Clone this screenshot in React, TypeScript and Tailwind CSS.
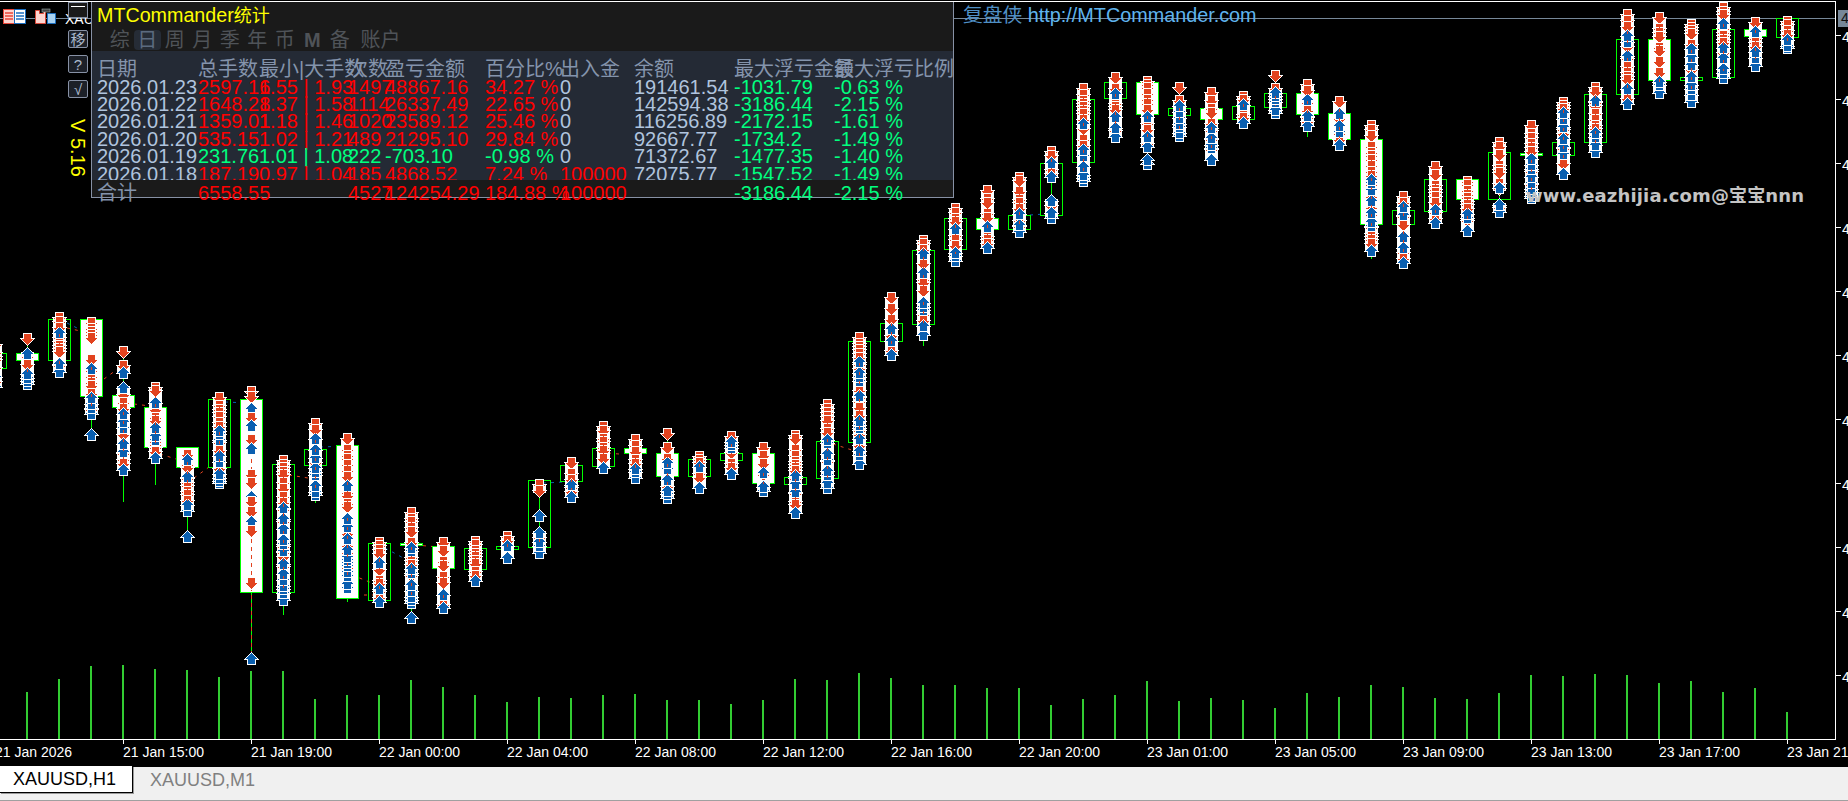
import React from "react";

const sans = "font-['Liberation_Sans','Noto_Sans_CJK_SC',sans-serif]";

type Seg = [number, number];
type Bar = {
  i: number;
  top: number;
  bot: number;
  fill?: boolean;
  segs: Seg[];
  wick?: number;
  arrows?: [number, "u" | "d"][];
};

// candles read off the chart, in page pixels
const bars: Bar[] = [
  { i: -1, top: 353, bot: 368, segs: [[340, 392]] },
  { i: 0, top: 353, bot: 360, fill: true, segs: [[334, 345], [348, 389]] },
  { i: 1, top: 319, bot: 360, segs: [[313, 377]] },
  { i: 2, top: 319, bot: 396, fill: true, segs: [[318, 344], [355, 419], [430, 440]], wick: 430 },
  { i: 3, top: 395, bot: 407, fill: true, segs: [[347, 358], [361, 378], [382, 475]], wick: 502 },
  { i: 4, top: 407, bot: 447, fill: true, segs: [[383, 463]], wick: 485 },
  { i: 5, top: 447, bot: 467, fill: true, segs: [[450, 516], [532, 542]], wick: 532 },
  { i: 6, top: 399, bot: 467, segs: [[393, 488]] },
  {
    i: 7, top: 399, bot: 592, fill: true, segs: [], wick: 653,
    arrows: [[387, "d"], [392, "d"], [403, "u"], [413, "d"], [420, "u"], [435, "d"], [443, "u"], [470, "d"], [478, "d"], [491, "u"], [497, "d"], [507, "d"], [516, "u"], [526, "d"], [578, "d"], [653, "u"]],
  },
  { i: 8, top: 464, bot: 592, segs: [[456, 605]], wick: 615 },
  { i: 9, top: 449, bot: 465, segs: [[419, 500]], wick: 503 },
  { i: 10, top: 445, bot: 598, fill: true, segs: [[434, 593]], wick: 602 },
  { i: 11, top: 543, bot: 600, segs: [[538, 607]] },
  { i: 12, top: 543, bot: 545, fill: true, segs: [[508, 608], [613, 623]] },
  { i: 13, top: 546, bot: 568, fill: true, segs: [[538, 613]] },
  { i: 14, top: 548, bot: 569, segs: [[537, 586]] },
  { i: 15, top: 546, bot: 549, segs: [[532, 563]] },
  { i: 16, top: 480, bot: 547, segs: [[480, 497], [510, 521], [527, 558]] },
  { i: 17, top: 465, bot: 481, segs: [[458, 502]] },
  { i: 18, top: 448, bot: 466, segs: [[422, 473]] },
  { i: 19, top: 448, bot: 453, fill: true, segs: [[435, 483]] },
  { i: 20, top: 453, bot: 476, fill: true, segs: [[429, 440], [443, 503]] },
  { i: 21, top: 459, bot: 476, segs: [[452, 493]] },
  { i: 22, top: 453, bot: 460, segs: [[432, 479]] },
  { i: 23, top: 453, bot: 483, fill: true, segs: [[443, 496]] },
  { i: 24, top: 477, bot: 484, segs: [[431, 518]] },
  { i: 25, top: 441, bot: 478, segs: [[400, 493]] },
  { i: 26, top: 341, bot: 442, segs: [[333, 469]] },
  { i: 27, top: 323, bot: 341, segs: [[293, 360]] },
  { i: 28, top: 250, bot: 324, segs: [[236, 340]], wick: 346 },
  { i: 29, top: 218, bot: 249, segs: [[204, 266]] },
  { i: 30, top: 218, bot: 229, fill: true, segs: [[186, 253]] },
  { i: 31, top: 215, bot: 229, segs: [[173, 237]] },
  { i: 32, top: 163, bot: 215, segs: [[147, 182], [195, 223]] },
  { i: 33, top: 99, bot: 162, segs: [[84, 186]] },
  { i: 34, top: 82, bot: 98, segs: [[73, 142]] },
  { i: 35, top: 82, bot: 114, fill: true, segs: [[77, 152], [154, 169]] },
  { i: 36, top: 108, bot: 115, segs: [[83, 94], [96, 141]] },
  { i: 37, top: 108, bot: 119, fill: true, segs: [[88, 165]] },
  { i: 38, top: 106, bot: 119, segs: [[92, 128]] },
  { i: 39, top: 93, bot: 107, segs: [[70, 82], [84, 118]] },
  { i: 40, top: 93, bot: 114, fill: true, segs: [[80, 131]], wick: 137 },
  { i: 41, top: 113, bot: 139, fill: true, segs: [[97, 150]] },
  { i: 42, top: 139, bot: 224, fill: true, segs: [[121, 256]], wick: 259 },
  { i: 43, top: 210, bot: 224, segs: [[192, 268]] },
  { i: 44, top: 179, bot: 211, segs: [[162, 228]] },
  { i: 45, top: 179, bot: 199, fill: true, segs: [[177, 236]] },
  { i: 46, top: 152, bot: 199, segs: [[138, 195], [199, 217]] },
  { i: 47, top: 153, bot: 155, fill: true, segs: [[121, 203]] },
  { i: 48, top: 142, bot: 155, segs: [[98, 179]] },
  { i: 49, top: 94, bot: 142, segs: [[83, 157]] },
  { i: 50, top: 39, bot: 94, segs: [[10, 109]] },
  { i: 51, top: 39, bot: 80, fill: true, segs: [[13, 98]] },
  { i: 52, top: 77, bot: 80, segs: [[20, 107]] },
  { i: 53, top: 29, bot: 77, segs: [[3, 83]] },
  { i: 54, top: 29, bot: 36, fill: true, segs: [[18, 71]] },
  { i: 55, top: 18, bot: 37, segs: [[17, 53]] },
];

const volumeTops = [
  692, 679, 666, 665, 669, 670, 677, 671, 671, 699, 695, 695, 680, 687, 695, 702, 697, 698, 695, 694, 700, 700, 704, 700, 679, 680, 673, 678, 685, 685, 688, 688, 705, 699, 695, 681, 701, 698, 700, 708, 693, 697, 685, 687, 698, 699, 693, 675, 676, 674, 675, 683, 681, 692, 688, 712,
];

const orderLines: [number, number, number, number, string][] = [
  [67, 323, 85, 332, "#0a5fb0"],
  [67, 328, 85, 332, "#e2431f"],
  [104, 379, 119, 368, "#e2431f"],
  [134, 404, 150, 406, "#e2431f"],
  [160, 454, 176, 459, "#e2431f"],
  [194, 478, 209, 467, "#e2431f"],
  [225, 402, 249, 403, "#0a5fb0"],
  [289, 475, 308, 478, "#e2431f"],
  [320, 447, 348, 446, "#0a5fb0"],
  [352, 575, 372, 583, "#e2431f"],
  [348, 595, 374, 595, "#e2431f"],
  [385, 548, 407, 560, "#0a5fb0"],
  [415, 545, 439, 547, "#e2431f"],
  [543, 483, 565, 482, "#0a5fb0"],
  [608, 453, 619, 454, "#e2431f"],
  [833, 444, 855, 451, "#e2431f"],
  [1030, 215, 1045, 214, "#0a5fb0"],
];

const cx = (i: number) => 27 + 32 * i;

const Arrow = ({ x, y, dir }: { x: number; y: number; dir: "u" | "d" }) => {
  const pts =
    dir === "d"
      ? `${x - 3},${y} ${x + 4},${y} ${x + 4},${y + 5} ${x + 6},${y + 5} ${x + 0.5},${y + 11} ${x - 5},${y + 5} ${x - 3},${y + 5}`
      : `${x - 3},${y + 11} ${x + 4},${y + 11} ${x + 4},${y + 6} ${x + 6},${y + 6} ${x + 0.5},${y} ${x - 5},${y + 6} ${x - 3},${y + 6}`;
  return (
    <polygon
      points={pts}
      fill={dir === "d" ? "#e2431f" : "#0a5fb0"}
      stroke="#fff"
      strokeWidth={1.6}
      paintOrder="stroke"
      shapeRendering="crispEdges"
    />
  );
};

const Candle = ({ bar }: { bar: Bar }) => {
  const x = cx(bar.i);
  let seed = (bar.i + 7) * 7919;
  const rand = () => {
    seed = (seed * 1103515245 + 12345) % 2147483648;
    return seed / 2147483648;
  };
  const first = bar.segs.length ? bar.segs[0][0] : bar.top - 12;
  const last = bar.segs.length ? bar.segs[bar.segs.length - 1][1] : bar.bot;
  const wickBot = bar.wick ?? last;
  const list: [number, "u" | "d"][] = [];
  bar.segs.forEach(([t, b], s) => {
    let y = t;
    let n = 0;
    while (y + 12 < b) {
      const frac = (y - first) / (last - first);
      list.push([y, n === 0 && s === 0 ? "d" : rand() * 1.15 > frac ? "d" : "u"]);
      const r = rand();
      y += r < 0.25 ? 3 : r < 0.5 ? 4 : r < 0.72 ? 6 : r < 0.88 ? 8 : 11;
      n++;
    }
    const end: "u" | "d" =
      s === bar.segs.length - 1 ? "u" : n === 0 && s === 0 ? "d" : rand() > (b - first) / (last - first) ? "d" : "u";
    list.push([b - 11, end]);
  });
  // orange ones top-down and blue ones bottom-up, so the stems show as stripes
  const downs = list.filter((a) => a[1] === "d");
  const ups = list.filter((a) => a[1] === "u").reverse();
  return (
    <g>
      <line x1={x + 0.5} x2={x + 0.5} y1={first} y2={wickBot} stroke="#00ff00" shapeRendering="crispEdges" />
      <rect
        x={x - 10.5}
        y={bar.top + 0.5}
        width={22}
        height={bar.bot - bar.top}
        fill={bar.fill ? "#fff" : "none"}
        stroke="#00ff00"
        strokeWidth={1.5}
        shapeRendering="crispEdges"
      />
      {bar.segs.map(([t, b]) =>
        b - t > 16 ? <rect key={t} x={x - 6} y={t + 4} width={13} height={b - t - 8} fill="#fff" shapeRendering="crispEdges" /> : null,
      )}
      {bar.arrows ? (
        <line x1={x + 0.5} x2={x + 0.5} y1={first} y2={wickBot} stroke="#e2431f" strokeDasharray="4 4" shapeRendering="crispEdges" />
      ) : null}
      {downs.map(([y], k) => (
        <Arrow key={`d${k}`} x={x} y={y} dir="d" />
      ))}
      {ups.map(([y], k) => (
        <Arrow key={`u${k}`} x={x} y={y} dir="u" />
      ))}
      {bar.arrows?.map(([y, d], k) => (
        <Arrow key={`a${k}`} x={x} y={y} dir={d} />
      ))}
      {bar.segs.map(([t, b]) =>
        b - t > 30 ? (
          <line key={t} x1={x + 0.5} x2={x + 0.5} y1={t + 12} y2={b - 12} stroke="#e2431f" strokeDasharray="3 6" shapeRendering="crispEdges" />
        ) : null,
      )}
    </g>
  );
};

type Row = { date: string; vals: string[]; up: boolean; cash?: boolean };

const rows: Row[] = [
  { date: "2026.01.23", vals: ["2597.16", "1.55 | 1.93", "1497", "48867.16", "34.27 %"], up: true },
  { date: "2026.01.22", vals: ["1648.28", "1.37 | 1.58", "1114", "26337.49", "22.65 %"], up: true },
  { date: "2026.01.21", vals: ["1359.01", "1.18 | 1.46", "1020", "23589.12", "25.46 %"], up: true },
  { date: "2026.01.20", vals: ["535.15", "1.02 | 1.21", "489", "21295.10", "29.84 %"], up: true },
  { date: "2026.01.19", vals: ["231.76", "1.01 | 1.08", "222", "-703.10", "-0.98 %"], up: false },
  { date: "2026.01.18", vals: ["187.19", "0.97 | 1.04", "185", "4868.52", "7.24 %"], up: true, cash: true },
];
const tail = [
  ["191461.54", "-1031.79", "-0.63 %"],
  ["142594.38", "-3186.44", "-2.15 %"],
  ["116256.89", "-2172.15", "-1.61 %"],
  ["92667.77", "-1734.2", "-1.49 %"],
  ["71372.67", "-1477.35", "-1.40 %"],
  ["72075.77", "-1547.52", "-1.49 %"],
];

const cols = "grid grid-cols-[101px_61px_89px_37px_100px_75px_74px_100px_100px_119px] whitespace-nowrap";
const headers = ["日期", "总手数", "最小|大手数", "次数", "盈亏金额", "百分比%", "出入金", "余额", "最大浮亏金额", "最大浮亏比例"];
const tabs = ["综", "日", "周", "月", "季", "年", "币", "M", "备"];
const times = ["21 Jan 2026", "21 Jan 15:00", "21 Jan 19:00", "22 Jan 00:00", "22 Jan 04:00", "22 Jan 08:00", "22 Jan 12:00", "22 Jan 16:00", "22 Jan 20:00", "23 Jan 01:00", "23 Jan 05:00", "23 Jan 09:00", "23 Jan 13:00", "23 Jan 17:00", "23 Jan 21:00"];

const StatsPanel = () => (
  <div className={`absolute left-[91px] top-[2px] w-[863px] border-x border-b border-[#8791a5] bg-[#1a1a1a] text-[20px] ${sans}`}>
    <div className="h-[49px]">
      <div className="pl-[5px] leading-[26px] text-[19.7px] text-[#ffff00]">
        MTCommander<span className="text-[18px]">统计</span>
      </div>
      <div className="flex pl-[14px] text-[#4f5358] leading-[22px] mt-[1px]">
        {tabs.map((t) => (
          <div key={t} className={`w-[27.5px] h-[20px] flex items-center justify-center rounded-sm ${t === "日" ? "bg-[#262c36] text-[#5c6b80]" : ""} ${t === "M" ? "font-bold" : ""}`}>
            {t}
          </div>
        ))}
        <div className="ml-[7px] h-[20px] flex items-center">账户</div>
      </div>
    </div>
    <div className="h-[129px] overflow-hidden bg-[#242a35] pl-[5px]">
      <div className={`${cols} pt-[9px] h-[27.6px] leading-[18px] text-[#8494ac]`}>
        {headers.map((h) => (
          <div key={h}>{h}</div>
        ))}
      </div>
      {rows.map((r, n) => {
        const c = r.up ? "text-[#ff0000]" : "text-[#00ff7f]";
        return (
          <div key={r.date} className={`${cols} leading-[17.4px] h-[17.4px]`}>
            <div className="text-[#b0c4de]">{r.date}</div>
            {r.vals.map((v) => (
              <div key={v} className={c}>{v}</div>
            ))}
            <div className={r.cash ? "text-[#ff0000]" : "text-[#b0c4de]"}>{r.cash ? "100000" : "0"}</div>
            <div className="text-[#b0c4de]">{tail[n][0]}</div>
            <div className="text-[#00ff7f]">{tail[n][1]}</div>
            <div className="text-[#00ff7f]">{tail[n][2]}</div>
          </div>
        );
      })}
    </div>
    <div className={`${cols} pl-[5px] h-[17px] leading-[26px] text-[#ff0000]`}>
      <div className="text-[#8494ac]">合计</div>
      <div>6558.55</div>
      <div />
      <div>4527</div>
      <div>124254.29</div>
      <div>184.88 %</div>
      <div>100000</div>
      <div />
      <div className="text-[#00ff7f]">-3186.44</div>
      <div className="text-[#00ff7f]">-2.15 %</div>
    </div>
  </div>
);

const SideButtons = () => (
  <div className={`absolute left-[68px] top-[2px] w-[20px] flex flex-col items-center text-[#aab8cc] ${sans}`}>
    <div className="w-[20px] h-[16px] border border-[#8791a5] bg-[#1a1a1a] flex justify-center">
      <div className="w-[14px] h-px bg-white mt-[3px]" />
    </div>
    <div className="w-[20px] h-[18px] mt-[12px] border border-[#8791a5] bg-[#1c2028] rounded-[2px] flex items-center justify-center text-[15px] leading-none">移</div>
    <div className="w-[20px] h-[18px] mt-[7px] border border-[#8791a5] bg-[#1c2028] rounded-[2px] flex items-center justify-center text-[15px] leading-none">?</div>
    <div className="w-[20px] h-[18px] mt-[7px] border border-[#8791a5] bg-[#1c2028] rounded-[2px] flex items-center justify-center text-[15px] leading-none">√</div>
    <div className="mt-[21px] text-[#ffff00] text-[20px] leading-[20px] [writing-mode:vertical-rl] whitespace-nowrap">V 5.16</div>
  </div>
);

const ToolIcons = () => (
  <div className="absolute left-[3px] top-[8px] flex gap-[9px]">
    <svg width="23" height="17" viewBox="0 0 23 17">
      <rect x="0.5" y="1.5" width="11" height="14" fill="#fdd5d0" stroke="#e8473a" />
      <rect x="11.5" y="1.5" width="11" height="14" fill="#fff" stroke="#1c6fc0" />
      <path d="M2 5h8M2 8h8M2 11h8" stroke="#e8473a" strokeWidth="1.6" />
      <path d="M13 5h8M13 8h8M13 11h8" stroke="#1c6fc0" strokeWidth="1.6" />
    </svg>
    <svg width="22" height="17" viewBox="0 0 22 17">
      <path d="M0.5 15.5V2.5h4v3h4v-3h2v13z" fill="#fdd5d0" stroke="#d9483a" />
      <path d="M12.5 15.5V5.5h8v10z" fill="#a9d3f2" stroke="#1c6fc0" />
      <rect x="7" y="1" width="8" height="3" fill="#444" stroke="#9aa" strokeWidth="0.6" />
    </svg>
    <div className={`w-[27px] h-[17px] mt-[3px] overflow-hidden text-white text-[14px] leading-[17px] ${sans} -ml-[1px]`}>XAUUSD</div>
  </div>
);

const Chart = () => (
  <div className="relative w-[1836px] h-[739px] border-t border-r border-b border-white mt-px overflow-hidden">
    <svg className="block" width="1835" height="737" viewBox="0 2 1835 737">
      <line x1="0" x2="1835" y1="18.5" y2="18.5" stroke="#778899" />
      {volumeTops.map((t, i) => (
        <rect key={i} x={cx(i) - 1} y={t} width={2} height={739 - t} fill="#32cd32" />
      ))}
      {orderLines.map(([a, b, c, d, col], k) => (
        <line key={k} x1={a} y1={b} x2={c} y2={d} stroke={col} strokeDasharray="3 5" />
      ))}
      {bars.map((b) => (
        <Candle key={b.i} bar={b} />
      ))}
    </svg>
  </div>
);

const PriceAxis = () => (
  <div className={`relative flex-1 overflow-hidden pt-[35px] text-white text-[14px] ${sans}`}>
    <div className="absolute left-[2px] top-[10px] w-[12px] h-[17px] bg-[#778899] text-[#111] leading-[17px] pl-[3px]">4</div>
    {Array.from({ length: 11 }).map((_, i) => (
      <div key={i} className="h-[64px] flex items-start">
        <div className="w-[5px] h-px bg-white shrink-0" />
        <span className="leading-[2px] ml-px pt-px">4</span>
      </div>
    ))}
  </div>
);

const TimeAxis = () => (
  <div className={`flex h-[27px] overflow-hidden -ml-[5px] text-white text-[14px] ${sans}`}>
    {times.map((t) => (
      <div key={t} className="w-[128px] shrink-0">
        <div className="w-px h-[4px] bg-white" />
        <div className="leading-[16px] whitespace-nowrap">{t}</div>
      </div>
    ))}
  </div>
);

const TabBar = () => (
  <div className={`flex h-[34px] bg-[#f0f0f0] border-b border-[#a0a0a0] text-[18px] ${sans}`}>
    <div className="w-[133px] h-[27px] -mt-px bg-white border-r border-b border-black shadow-[1px_1px_0_#9a9a9a] pl-[13px] leading-[27px] text-black">XAUUSD,H1</div>
    <div className="pl-[17px] leading-[27px] text-[#808080]">XAUUSD,M1</div>
  </div>
);

export default function App() {
  return (
    <div className="w-[1848px] h-[801px] overflow-hidden bg-black flex flex-col">
      <div className="relative flex h-[740px]">
        <Chart />
        <PriceAxis />
        <ToolIcons />
        <SideButtons />
        <StatsPanel />
        <div className={`absolute left-[963px] top-[2px] text-[19.8px] leading-[26px] text-[#5fb4ee] ${sans}`}>
          <span className="text-[#4f8fc4]">复盘侠</span> http://MTCommander.com
        </div>
        <div className="absolute left-[1526px] top-[183px] text-[18px] font-bold leading-[26px] tracking-[0.15px] text-[#c4c4c4] font-['DejaVu_Sans','Noto_Sans_CJK_SC',sans-serif] whitespace-nowrap">
          www.eazhijia.com@宝宝nnn
        </div>
      </div>
      <TimeAxis />
      <TabBar />
    </div>
  );
}
